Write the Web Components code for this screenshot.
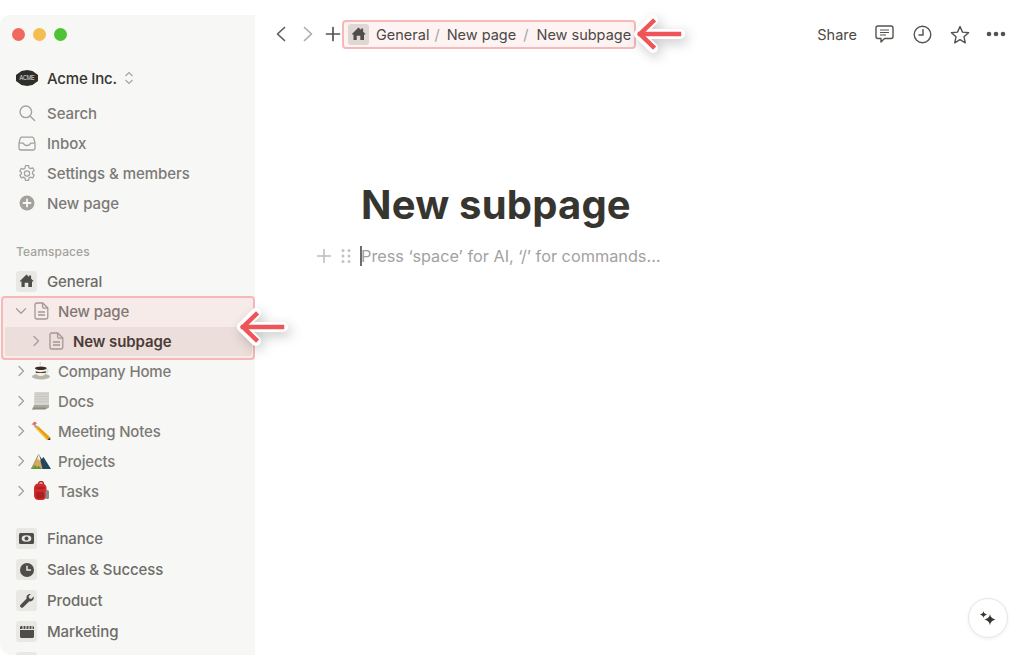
<!doctype html>
<html lang="en">
<head>
<meta charset="utf-8">
<title>New subpage</title>
<style>
  html,body{margin:0;height:100%;background:#fff;overflow:hidden}
  body{font-family:Inter,"Liberation Sans",sans-serif}
</style>
</head>
<body>
<app-window>
  <side-bar slot="side"></side-bar>
  <top-bar slot="top"></top-bar>
  <page-body slot="main"></page-body>
</app-window>

<script>
const ICONS = {
  search: `<svg width="18" height="18" viewBox="0 0 18 18" fill="none" stroke="#a3a29e" stroke-width="1.4"><circle cx="7.8" cy="7.8" r="5.8"/><path d="M12 12l4.6 4.6" stroke-linecap="round"/></svg>`,
  inbox: `<svg width="18" height="18" viewBox="0 0 18 18" fill="none" stroke="#a3a29e" stroke-width="1.3" stroke-linejoin="round"><path d="M4 3.2h10c.8 0 1.3.3 1.7 1l1.3 5v5c0 1.100-.7 1.800-1.800 1.800H2.800C1.700 16 1 15.300 1 14.200v-5l1.300-5c.4-.7.900-1 1.700-1z"/><path d="M1.200 9.200h4.300c.5 1.500 1.900 2.300 3.500 2.300s3-.8 3.500-2.300h4.300"/></svg>`,
  gear: `<svg width="18" height="18" viewBox="0 0 18 18" fill="none" stroke="#a3a29e" stroke-width="1.25" stroke-linejoin="round"><path d="M7.500 1.500h3l.5 2.200 1.500.9 2.200-.7 1.500 2.600-1.700 1.500v1.800l1.700 1.500-1.500 2.600-2.200-.7-1.500.9-.5 2.200h-3l-.5-2.200-1.500-.9-2.200.7-1.500-2.600 1.700-1.500V8.500L1.800 7l1.500-2.600 2.200.7 1.500-.9z"/><circle cx="9" cy="9.400" r="2.600"/></svg>`,
  plusc: `<svg width="16" height="16" viewBox="0 0 16 16"><circle cx="8" cy="8" r="7.500" fill="#a3a29e"/><path d="M8 4.500v7M4.500 8h7" stroke="#f7f7f5" stroke-width="1.800" stroke-linecap="round"/></svg>`,
  home: `<svg width="15" height="14" viewBox="0 0 15 14" fill="#4f4d49"><path d="M7.500 .6l2.600 2.300V1.500h2v3.200l2.500 2.200-.8.900-.8-.6V13H9.300V8.800H5.700V13H2.500V7.200l-.8.600-.8-.9z"/></svg>`,
  doc: `<svg width="15" height="18" viewBox="0 0 15 18" fill="none" stroke="#a09c99" stroke-width="1.300" stroke-linejoin="round"><path d="M2.800 1h6l5 5v9.200c0 1.100-.7 1.800-1.800 1.800H2.800C1.700 17 1 16.300 1 15.200V2.800C1 1.700 1.700 1 2.800 1z"/><path d="M8.600 1.200v3.600c0 .8.500 1.300 1.300 1.300h3.700M4 10h7M4 13h7"/></svg>`,
  money: `<svg width="15" height="11" viewBox="0 0 15 11"><rect width="15" height="11" rx="1.500" fill="#4f4d49"/><ellipse cx="7.500" cy="5.500" rx="4.800" ry="3.300" fill="#e8e7e4"/><circle cx="7.500" cy="5.500" r="2" fill="#4f4d49"/></svg>`,
  clock: `<svg width="14" height="14" viewBox="0 0 14 14"><circle cx="7" cy="7" r="7" fill="#4f4d49"/><path d="M7 2.800V7h4" stroke="#e8e7e4" stroke-width="1.500" fill="none"/></svg>`,
  wrench: `<svg width="14" height="14" viewBox="0 0 14 14" fill="#4f4d49"><path d="M13.700 2.500l-2.500 2.400-2-.6-.6-2L11 0C8.900-.5 6.500 1 6.500 3.300c0 .5 0 .9.200 1.300L.6 10.700c-.7.700-.7 1.700 0 2.400l.2.200c.7.700 1.700.7 2.400 0l6.100-6.100c2.600.9 5.200-1.800 4.400-4.700z"/></svg>`,
  clap: `<svg width="14" height="12" viewBox="0 0 14 12"><path fill="#4f4d49" d="M1.500 0h11C13.400 0 14 .6 14 1.500V3H0V1.500C0 .6.600 0 1.500 0zM0 4h14v6.500c0 .9-.6 1.500-1.500 1.500h-11C.6 12 0 11.400 0 10.500z"/><path stroke="#e8e7e4" stroke-width="1.100" d="M3 0v3M6 0v3M9 0v3M12 0v3"/></svg>`,
  coffee: `<svg width="20" height="20" viewBox="0 0 20 20"><path d="M9 1c1 1-.6 1.600.4 3" stroke="#c9c7c2" fill="none"/><ellipse cx="10" cy="15.500" rx="9" ry="3" fill="#b9b5a9"/><path d="M4 7h11.500c0 4.500-1.500 8-5.700 8S4 11.500 4 7z" fill="#f3f1ea"/><path d="M15 8.500c2.500-.5 2.800 3-.6 3.400" fill="none" stroke="#dcd9cf" stroke-width="1.200"/><ellipse cx="9.800" cy="7.200" rx="5.800" ry="1.800" fill="#3b2a20"/><path d="M4.500 10c1.500 1.500 8 1.500 10.500 0l-.5 2H5z" fill="#4a3a30"/></svg>`,
  scroll: `<svg width="20" height="20" viewBox="0 0 20 20"><path d="M3.500 1h14.500v13H3z" fill="#d5d4ce"/><path d="M3.500 3h14.500M3.500 5.500h14.500M3.500 8h14.500M3.500 10.500h14.500" stroke="#c2c1ba" stroke-width=".8"/><path d="M1 18.500l2-4.500h15v2.500z" fill="#a9a89f"/><path d="M1 18.500h13l4-2H3z" fill="#8b8a80"/></svg>`,
  pencil: `<svg width="20" height="20" viewBox="0 0 20 20"><path d="M4.500 3.500l-1.800 1.500 2 2.500 2.200-1.700z" fill="#a9a9a9"/><path d="M1 3l2-2c.7-.5 1.400-.4 1.900.2l1 1.100-2.800 2.400-1.100-1.200C.5 4 .5 3.500 1 3z" fill="#e86a6a"/><path d="M6.800 5.600L4.600 7.400 15.700 19l3.200-.8-.6-3.300z" fill="#f6c02f"/><path d="M5.700 6.500l11 11.600 2.200-.6-.4-1L7 5z" fill="#e39c1b"/><path d="M16.500 19.100l2.900-.1-.3-2.800z" fill="#333"/></svg>`,
  mountain: `<svg width="20" height="20" viewBox="0 0 20 20"><path d="M0 18L7.500 3l3.200 5 1.800-2L20 18z" fill="#23465b"/><path d="M0 18L7.800 3l3.700 15z" fill="#d9a75f"/><path d="M7.800 3L6 9l1.500-1 1.200 2 1-1z" fill="#f3ead9"/><path d="M0 18l4-4 2 2 2-1 3 3z" fill="#5b9a3f"/></svg>`,
  pack: `<svg width="16" height="20" viewBox="0 0 16 20"><path d="M5.500 3c0-3.300 5-3.300 5 0" fill="none" stroke="#a51d1f" stroke-width="1.300"/><rect x="1" y="2.500" width="12.500" height="16.500" rx="4.500" fill="#d02a2c"/><rect x="12.500" y="9" width="3.500" height="9" rx="1.500" fill="#8e8a86"/><rect x="3" y="11" width="8" height="6.500" rx="1.500" fill="#ae1e20"/><path d="M3 7h8" stroke="#8e1719" stroke-width="1"/></svg>`,
  right: `<svg width="10" height="12" viewBox="0 0 10 12" fill="none" stroke="#a3a29e" stroke-width="1.300" stroke-linecap="round" stroke-linejoin="round"><path d="M3 1.500L7.500 6 3 10.500"/></svg>`,
  down: `<svg width="12" height="10" viewBox="0 0 12 10" fill="none" stroke="#a3a29e" stroke-width="1.300" stroke-linecap="round" stroke-linejoin="round"><path d="M1.500 2.800L6 7.300l4.500-4.500"/></svg>`
};

class XIcon extends HTMLElement {
  connectedCallback() {
    this.attachShadow({ mode: "open" }).innerHTML = `<style>:host{display:inline-flex;align-items:center;justify-content:center;line-height:0}</style>${ICONS[this.getAttribute("name")] || ""}`;
  }
}
customElements.define("x-icon", XIcon);

class AppWindow extends HTMLElement {
  constructor() {
    super();
    this.attachShadow({ mode: "open" }).innerHTML = `
      <style>
        :host{display:flex;height:655px;box-sizing:border-box;padding-top:15px;overflow:hidden}
        .side{flex:0 0 255px;min-width:0;position:relative;z-index:1}
        .main{flex:1;min-width:0;display:flex;flex-direction:column;position:relative;margin-top:-15px}
      </style>
      <div class="side"><slot name="side"></slot></div>
      <div class="main"><slot name="top"></slot><slot name="main"></slot></div>`;
  }
}

// one row of the sidebar: icon cell + label, "tree" rows have a chevron in front
class NavRow extends HTMLElement {
  constructor() {
    super();
    this.attachShadow({ mode: "open" }).innerHTML = `
      <style>
        :host{display:flex;align-items:center;height:var(--row,30px);font-size:15px;font-weight:500;color:#7b7a76;white-space:nowrap;letter-spacing:-.05px}
        .lead{display:flex;justify-content:center;align-items:center;flex:0 0 21px;margin-left:16px;margin-right:10px}
        :host([tree]) .lead{flex:0 0 12px;margin-left:15px;margin-right:2px}
        :host([tree]) .ic{display:flex;justify-content:center;flex:0 0 24px;margin-right:5px}
        :host([tree]){letter-spacing:-.17px}
        :host([tile]) .lead{height:21px;background:#e9e8e5;border-radius:3px}
        :host([tile]){color:#6d6c68;letter-spacing:-.1px}
        :host([depth="1"]) .lead{margin-left:30px}
        :host([strong]){font-weight:600;color:#3f3a37;letter-spacing:-.1px}
      </style>
      <span class="lead"><slot name="lead"></slot></span>
      ${this.hasAttribute("tree") ? `<span class="ic"><slot name="icon"></slot></span>` : ""}
      <slot></slot>`;
  }
}

class CalloutArrow extends HTMLElement {
  constructor() {
    super();
    this.attachShadow({ mode: "open" }).innerHTML = `
      <style>:host{display:block;position:absolute;width:54px;height:40px;filter:drop-shadow(3px 4px 6px rgba(0,0,0,.22))}svg{display:block}</style>
      <svg width="54" height="40" viewBox="0 0 54 40" fill="none" stroke-linecap="square" stroke-linejoin="miter">
        <path d="M6 20h41M20 6L6 20l14 14" stroke="#fff" stroke-width="10" stroke-linejoin="round" stroke-linecap="round"/>
        <path d="M7 20h39M20 7.500L7 20l13 12.500" stroke="#ee5558" stroke-width="4.500"/>
      </svg>`;
  }
}

class SideBar extends HTMLElement {
  constructor() {
    super();
    const tree = (ic, t) => `<nav-row tree><x-icon slot="lead" name="right"></x-icon><x-icon slot="icon" name="${ic}"></x-icon>${t}</nav-row>`;
    const tile = (ic, t) => `<nav-row tile><x-icon slot="lead" name="${ic}"></x-icon>${t}</nav-row>`;
    this.attachShadow({ mode: "open" }).innerHTML = `
      <style>
        :host{display:block;height:100%;box-sizing:border-box;background:#f7f7f5;border-radius:10px 0 0 12px;position:relative;padding-top:9px}
        .lights{display:flex;gap:8px;padding-left:12px;height:39px;align-items:flex-start;padding-top:4px;box-sizing:border-box}
        .lights i{width:13px;height:13px;border-radius:50%}
        .ws{display:flex;align-items:center;height:30px;margin-bottom:5px;padding-left:16px;font-size:15px;font-weight:500;color:#37352f;letter-spacing:-.2px}
        .ws svg{margin-right:9px}
        .ws .sw{margin-left:7px}
        .head{height:20px;margin:24px 0 4px;padding-left:16px;line-height:20px;font-size:12px;font-weight:500;color:#a3a29e;letter-spacing:.1px}
        .group{position:relative;height:60px}
        .group .sel{position:absolute;left:5px;right:3px;top:31px;height:29px;background:#ece9e6;border-radius:3px}
        .group nav-row{position:relative}
        .group .mark{position:absolute;left:1px;right:0;top:0;height:63.500px;box-sizing:border-box;border:2px solid #f6b9b9;border-radius:4px;background:rgba(238,85,88,.07)}
        .teams{margin-top:17px;--row:31px}
        callout-arrow{left:236px;top:292px}
      </style>
      <div class="lights"><i style="background:#ee6a5f"></i><i style="background:#f5bd4f"></i><i style="background:#4fc235"></i></div>
      <div class="ws">
        <svg width="22" height="16" viewBox="0 0 22 16"><path d="M5.500 1L11 0l5.500 1L22 5v6l-5.500 4L11 16l-5.500-1L0 11V5z" fill="#2f2e2b"/><text x="11" y="10.400" font-family="Liberation Sans Narrow,Liberation Sans,sans-serif" font-size="6.500" fill="#e4e4e2" text-anchor="middle" textLength="15" lengthAdjust="spacingAndGlyphs">ACME</text></svg>
        Acme Inc.
        <svg class="sw" width="10" height="14" viewBox="0 0 10 14" fill="none" stroke="#a3a29e" stroke-width="1.100"><path d="M1.500 5L5 1.500 8.500 5M1.500 9L5 12.500 8.500 9"/></svg>
      </div>
      <nav-row><x-icon slot="lead" name="search"></x-icon>Search</nav-row>
      <nav-row><x-icon slot="lead" name="inbox"></x-icon>Inbox</nav-row>
      <nav-row><x-icon slot="lead" name="gear"></x-icon>Settings &amp; members</nav-row>
      <nav-row><x-icon slot="lead" name="plusc"></x-icon>New page</nav-row>
      <div class="head">Teamspaces</div>
      ${tile("home", "General")}
      <div class="group">
        <div class="sel"></div>
        <nav-row tree><x-icon slot="lead" name="down"></x-icon><x-icon slot="icon" name="doc"></x-icon>New page</nav-row>
        <nav-row tree depth="1" strong><x-icon slot="lead" name="right"></x-icon><x-icon slot="icon" name="doc"></x-icon>New subpage</nav-row>
        <div class="mark"></div>
      </div>
      ${tree("coffee", "Company Home")}${tree("scroll", "Docs")}${tree("pencil", "Meeting Notes")}${tree("mountain", "Projects")}${tree("pack", "Tasks")}
      <div class="teams">
        ${tile("money", "Finance")}${tile("clock", "Sales &amp; Success")}${tile("wrench", "Product")}${tile("clap", "Marketing")}${tile("", "")}
      </div>
      <callout-arrow></callout-arrow>`;
  }
}

class TopBar extends HTMLElement {
  constructor() {
    super();
    this.attachShadow({ mode: "open" }).innerHTML = `
      <style>
        :host{display:flex;align-items:center;height:68px;box-sizing:border-box;padding-left:18px;font-size:14.500px;color:#4b4945;position:relative;flex:none;font-weight:400}
        .nav{display:flex;align-items:center}
        svg{display:block}
        .crumbs{display:flex;align-items:center;height:29px;box-sizing:border-box;margin-left:1px;padding:0 3px 0 4px;border:2px solid #f6b9b9;border-radius:4px;background:rgba(238,85,88,.07);white-space:nowrap}
        .tile{display:flex;align-items:center;justify-content:center;width:21px;height:21px;background:#e0d6d4;border-radius:3px;margin-right:7px}
        .sep{color:#a3a29e}
        .right{margin-left:auto;display:flex;align-items:center;padding-right:18px}
        .share{margin-right:18px}
        .right svg{flex:none}
        callout-arrow{left:378px;top:14px}
      </style>
      <div class="nav">
        <svg width="16" height="18" viewBox="0 0 16 18" fill="none" stroke="#5f5d59" stroke-width="1.700" stroke-linecap="round" stroke-linejoin="round"><path d="M11.500 2.500L4.500 9l7 6.500"/></svg>
        <svg style="margin-left:11px" width="16" height="18" viewBox="0 0 16 18" fill="none" stroke="#adacA8" stroke-width="1.700" stroke-linecap="round" stroke-linejoin="round"><path d="M4.500 2.500l7 6.500-7 6.500"/></svg>
        <svg style="margin-left:9px" width="16" height="16" viewBox="0 0 16 16" fill="none" stroke="#55534f" stroke-width="1.700" stroke-linecap="round"><path d="M8 1.500v13M1.500 8h13"/></svg>
      </div>
      <div class="crumbs">
        <span class="tile"><x-icon name="home"></x-icon></span>
        <span>General</span><span class="sep" style="margin:0 7px 0 5px">/</span>
        <span>New page</span><span class="sep" style="margin:0 8px 0 7px">/</span>
        <span>New subpage</span>
      </div>
      <callout-arrow></callout-arrow>
      <div class="right">
        <span class="share">Share</span>
        <svg width="19" height="20" viewBox="0 0 19 20" fill="none" stroke="#55534f" stroke-width="1.400" stroke-linejoin="round"><path d="M3 2h13c1.100 0 2 .9 2 2v8.500c0 1.100-.9 2-2 2H9.500L6 18v-3.500H3c-1.100 0-2-.9-2-2V4c0-1.100.9-2 2-2z"/><path d="M5 6h9M5 8.500h9M5 11h6" stroke-width="1.100"/></svg>
        <svg style="margin-left:19px" width="19" height="19" viewBox="0 0 19 19" fill="none" stroke="#55534f" stroke-width="1.400"><circle cx="9.500" cy="9.500" r="8.300"/><path d="M10 4.500v5.500H6" stroke-linecap="round"/></svg>
        <svg style="margin-left:18px" width="20" height="19" viewBox="0 0 20 19" fill="none" stroke="#55534f" stroke-width="1.400" stroke-linejoin="round"><path d="M10 1.500l2.500 5.600 6.100.6-4.600 4.100 1.300 6L10 14.700l-5.300 3.100 1.300-6-4.600-4.100 6.100-.6z"/></svg>
        <svg style="margin-left:16px" width="20" height="6" viewBox="0 0 20 6" fill="#55534f"><circle cx="3" cy="3" r="2.300"/><circle cx="10" cy="3" r="2.300"/><circle cx="17" cy="3" r="2.300"/></svg>
      </div>`;
  }
}

class PageBody extends HTMLElement {
  constructor() {
    super();
    this.attachShadow({ mode: "open" }).innerHTML = `
      <style>
        :host{display:block;flex:1;min-height:0;padding-top:112px}
        h1{margin:0 0 0 106px;font-size:40px;line-height:50px;font-weight:700;color:#37352f;letter-spacing:.2px}
        .line{display:flex;align-items:center;height:26px;margin-top:13px;padding-left:60px}
        .line svg{flex:none;display:block}
        .caret{flex:none;width:1.500px;height:20px;background:#6d6c68;margin-left:8px;margin-right:-.5px}
        .ph{font-size:16.280px;color:#a3a29e;white-space:nowrap}
        ai-button{position:absolute;right:16px;bottom:17px}
      </style>
      <h1>New subpage</h1>
      <div class="line">
        <svg width="18" height="18" viewBox="0 0 18 18" stroke="#bdbcb8" stroke-width="1.500" stroke-linecap="round"><path d="M9 2.500v13M2.500 9h13"/></svg>
        <svg style="margin-left:7px" width="12" height="18" viewBox="0 0 12 18" fill="#c4c3bf"><circle cx="3" cy="3.500" r="1.500"/><circle cx="9" cy="3.500" r="1.500"/><circle cx="3" cy="9" r="1.500"/><circle cx="9" cy="9" r="1.500"/><circle cx="3" cy="14.500" r="1.500"/><circle cx="9" cy="14.500" r="1.500"/></svg>
        <span class="caret"></span><span class="ph">Press ‘space’ for AI, ‘/’ for commands…</span>
      </div>
      <ai-button></ai-button>`;
  }
}

class AiButton extends HTMLElement {
  constructor() {
    super();
    this.attachShadow({ mode: "open" }).innerHTML = `
      <style>:host{display:flex;align-items:center;justify-content:center;width:40px;height:40px;box-sizing:border-box;background:#fff;border:1px solid #e6e6e4;border-radius:50%;box-shadow:0 1px 4px rgba(0,0,0,.06)}</style>
      <svg width="18" height="18" viewBox="0 0 18 18" fill="#37352f"><path d="M11 5c.6 3 1.500 4 5.500 5.500-4 1.500-4.900 2.500-5.500 6-.6-3.500-1.500-4.500-5.500-6C9.500 9 10.400 8 11 5z"/><path d="M4.500 2c.4 2 .9 2.500 3.500 3.500C5.400 6.500 4.900 7 4.500 9 4.100 7 3.600 6.500 1 5.500 3.600 4.500 4.100 4 4.500 2z"/></svg>`;
  }
}

customElements.define("nav-row", NavRow);
customElements.define("callout-arrow", CalloutArrow);
customElements.define("ai-button", AiButton);
customElements.define("side-bar", SideBar);
customElements.define("top-bar", TopBar);
customElements.define("page-body", PageBody);
customElements.define("app-window", AppWindow);
</script>
</body>
</html>
